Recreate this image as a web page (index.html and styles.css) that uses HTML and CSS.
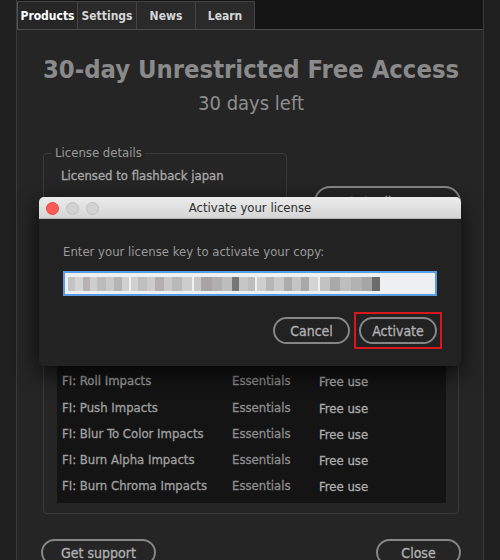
FILE: index.html
```html
<!DOCTYPE html>
<html lang="en">

<head>
    <meta charset="UTF-8">
    <meta name="viewport" content="width=device-width, initial-scale=1.0">
    <title>Activate your license</title>
    <link rel="stylesheet" href="styles.css">
</head>

<body>
    <div class="app">
        <div class="panel">
            <div class="tabs">
                <div class="tab active">Products</div>
                <div class="tab">Settings</div>
                <div class="tab">News</div>
                <div class="tab">Learn</div>
            </div>

            <div class="content">
                <h1>30-day Unrestricted Free Access</h1>
                <h2>30 days left</h2>

                <div class="license-row">
                    <fieldset class="license-box">
                        <legend>License details</legend>
                        <p class="license-line">Licensed to flashback japan</p>
                        <p class="license-line later">Trial version</p>
                    </fieldset>
                    <button class="pill get-license">Get a license</button>
                </div>

                <fieldset class="products-box">
                    <div class="product-list">
                        <div class="product"><span class="name">FI: Blur Impacts</span><span class="pack">Essentials</span><span class="use">Free use</span></div>
                        <div class="product"><span class="name">FI: Glow Impacts</span><span class="pack">Essentials</span><span class="use">Free use</span></div>
                        <div class="product"><span class="name">FI: Roll Impacts</span><span class="pack">Essentials</span><span class="use">Free use</span></div>
                        <div class="product"><span class="name">FI: Push Impacts</span><span class="pack">Essentials</span><span class="use">Free use</span></div>
                        <div class="product"><span class="name">FI: Blur To Color Impacts</span><span class="pack">Essentials</span><span class="use">Free use</span></div>
                        <div class="product"><span class="name">FI: Burn Alpha Impacts</span><span class="pack">Essentials</span><span class="use">Free use</span></div>
                        <div class="product"><span class="name">FI: Burn Chroma Impacts</span><span class="pack">Essentials</span><span class="use">Free use</span></div>
                    </div>
                </fieldset>

                <div class="footer">
                    <button class="pill support">Get support</button>
                    <button class="pill close">Close</button>
                </div>
            </div>
        </div>

        <div class="dialog">
            <div class="titlebar">
                <div class="lights">
                    <span class="light red"></span>
                    <span class="light"></span>
                    <span class="light"></span>
                </div>
                <span class="dialog-title">Activate your license</span>
            </div>
            <div class="dialog-body">
                <p class="prompt">Enter your license key to activate your copy:</p>
                <div class="key-input">
                    <span class="key-group g1"></span>
                    <span class="key-group g2"></span>
                    <span class="key-group g3"></span>
                    <span class="key-group g4"></span>
                    <span class="key-group g5"></span>
                </div>
                <div class="dialog-buttons">
                    <button class="pill cancel">Cancel</button>
                    <span class="highlight"><button class="pill activate">Activate</button></span>
                </div>
            </div>
        </div>
    </div>
</body>

</html>
```

FILE: styles.css
```css
body {
    margin: 0;
    background: #1f1f1f;
    font-family: "DejaVu Sans Condensed", "DejaVu Sans", sans-serif;
}

.app {
    position: relative;
    width: 500px;
    height: 560px;
    overflow: hidden;
    background: #1f1f1f;
}

.panel {
    margin-left: 16px;
    width: 466px;
    height: 560px;
    border-left: 1px solid #3a3a3a;
    border-right: 1px solid #3a3a3a;
    background: #252525;
}

.tabs {
    display: flex;
    height: 29px;
    background: #141414;
    border-bottom: 1px solid #4c4c4c;
}

.tab {
    height: 28px;
    margin-top: 1px;
    box-sizing: border-box;
    border: 1px solid #444;
    border-bottom: none;
    border-left: none;
    background: #2a2a2a;
    color: #d6d6d6;
    font-size: 12px;
    font-weight: bold;
    line-height: 29px;
    text-align: center;
    width: 59px;
}

.tab.active {
    width: 61px;
    color: #fff;
    background: #262626;
    border-left: 1px solid #555;
}

.content {
    padding: 0 24px 0 26px;
}

h1 {
    margin: 23px -4px 0;
    font-size: 25.4px;
    line-height: 32px;
    white-space: nowrap;
    text-align: center;
    color: #8a8a8a;
}

h2 {
    margin: 5px 0 0;
    font-size: 20px;
    font-weight: normal;
    line-height: 26px;
    text-align: center;
    color: #8e8e8e;
}

.license-row {
    display: flex;
    justify-content: space-between;
    align-items: flex-start;
    margin-top: 29px;
}

.license-box {
    width: 244px;
    height: 120px;
    box-sizing: border-box;
    margin: 0;
    padding: 0 8px;
    border: 1px solid #3a3a3a;
    border-radius: 4px;
}

legend {
    padding: 0 3px;
    font-size: 13px;
    line-height: 16px;
    color: #9a9a9a;
}

.license-line {
    margin: 7px 0 0 9px;
    font-size: 13px;
    color: #a8a8a8;
    -webkit-text-stroke: 0.3px #a8a8a8;
}

.license-line.later {
    margin-top: 30px;
}

.pill {
    box-sizing: border-box;
    height: 27px;
    padding: 0;
    border: 2px solid #868686;
    border-radius: 14px;
    background: transparent;
    color: #b0b0b0;
    font-family: inherit;
    font-size: 14px;
    -webkit-text-stroke: 0.3px #b0b0b0;
}

.get-license {
    width: 147px;
    height: 32px;
    border-radius: 16px;
    margin: 41px -2px 0 0;
}

.products-box {
    margin: 45px 0 0;
    padding: 0 12px 10px 13px;
    border: 1px solid #3a3a3a;
    border-radius: 4px;
}

.product-list {
    background: #141414;
    padding: 4px 0 4px;
}

.product {
    display: flex;
    height: 26.3px;
    align-items: center;
    font-size: 13px;
    -webkit-text-stroke: 0.3px currentColor;
}

.product .name {
    width: 170px;
    padding-left: 5px;
    color: #a0a0a0;
}

.product .pack {
    width: 87px;
    color: #8e8e8e;
}

.product .use {
    color: #acacac;
    padding-top: 2px;
}

.footer {
    display: flex;
    justify-content: space-between;
    margin-top: 25px;
}

.support {
    width: 115px;
    margin-left: -2px;
}

.close {
    width: 85px;
    margin-right: -2px;
}

/* dialog floats over the panel */
.dialog {
    position: absolute;
    top: 197px;
    left: 39px;
    width: 422px;
    height: 169px;
    border-radius: 5px;
    overflow: hidden;
    background: #222;
    box-shadow: 0 8px 22px rgba(0, 0, 0, 0.75);
}

.titlebar {
    position: relative;
    height: 21px;
    background: linear-gradient(#ececec, #d5d5d5);
    border-bottom: 1px solid #b5b5b5;
    text-align: center;
}

.lights {
    position: absolute;
    left: 7px;
    top: 5px;
    display: flex;
    gap: 7px;
}

.light {
    width: 11px;
    height: 11px;
    border-radius: 50%;
    background: #d2d2d2;
    border: 1px solid #c0c0c0;
}

.light.red {
    background: #fc5a55;
    border-color: #e2463f;
}

.dialog-title {
    font-size: 13px;
    line-height: 21px;
    color: #2e2e2e;
}

.dialog-body {
    padding: 0 24px 0 24px;
}

.prompt {
    margin: 25px 0 0;
    font-size: 13px;
    line-height: 16px;
    color: #9a9a9a;
}

.key-input {
    display: flex;
    align-items: center;
    gap: 2px;
    height: 25px;
    margin-top: 11px;
    padding: 0 3px;
    box-sizing: border-box;
    border: 2px solid #5a9be2;
    background: #eef0f2;
}

.key-group {
    height: 14px;
    width: 61px;
}

.g1 {
    background: linear-gradient(90deg, #c4c4c4 0 12%, #d4d4d4 12% 24%, #b8b2b4 24% 36%, #cfcfcf 36% 48%, #bcbcbc 48% 62%, #c9c9c9 62% 76%, #b5b5b5 76% 88%, #d0d0d0 88% 100%);
}

.g2 {
    background: linear-gradient(90deg, #d0d0d0 0 12%, #bfbfbf 12% 26%, #cbcbcb 26% 40%, #b4b0b2 40% 54%, #c8c8c8 54% 68%, #b9b9b9 68% 84%, #cdcdcd 84% 100%);
}

.g3 {
    background: linear-gradient(90deg, #c8c8c8 0 12%, #a8a4a6 12% 30%, #b0b0b0 30% 46%, #bdbdbd 46% 62%, #777 62% 74%, #c6c6c6 74% 88%, #bcbcbc 88% 100%);
}

.g4 {
    background: linear-gradient(90deg, #cfcfcf 0 14%, #b6b6b6 14% 28%, #c9c9c9 28% 44%, #acacac 44% 58%, #c4c4c4 58% 72%, #a9a9a9 72% 86%, #d4d4d4 86% 100%);
}

.g5 {
    width: 60px;
    background: linear-gradient(90deg, #c2c2c2 0 16%, #a9a9a9 16% 34%, #bebebe 34% 52%, #b1b1b1 52% 70%, #a6a6a6 70% 86%, #6c6c6c 86% 100%);
}

.dialog-buttons {
    display: flex;
    justify-content: flex-end;
    align-items: center;
    gap: 4px;
    margin-top: 16px;
}

.cancel {
    width: 77px;
}

.highlight {
    display: flex;
    padding: 3px;
    border: 2px solid #d8161b;
    margin-right: -5px;
}

.activate {
    width: 78px;
}
```
